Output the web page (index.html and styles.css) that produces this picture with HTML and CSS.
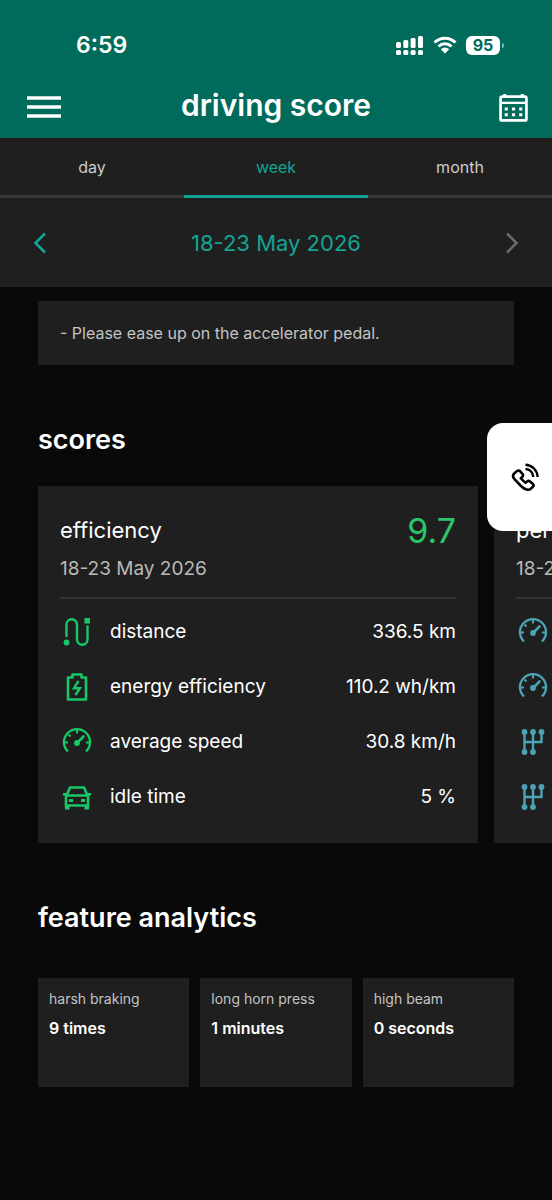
FILE: index.html
```html
<!DOCTYPE html>
<html lang="en">
<head>
<meta charset="utf-8">
<meta name="viewport" content="width=device-width, initial-scale=1">
<title>driving score</title>
<link rel="stylesheet" href="styles.css">
</head>
<body>
<svg class="sprite" aria-hidden="true">
  <symbol id="gauge" viewBox="0 0 30 30">
    <path d="M6 24.500A13 13 0 1 1 24 24.500" fill="none" stroke="currentColor" stroke-width="2.400"/>
    <path d="M15 3v3.500M3 15.500h3M27 15.500h-3M6.500 7.500l2 2" fill="none" stroke="currentColor" stroke-width="2"/>
    <path d="M15 16l6.500-6.500" stroke="currentColor" stroke-width="2.600" stroke-linecap="round"/>
    <circle cx="15" cy="16" r="2.900" fill="currentColor"/>
  </symbol>
  <symbol id="gears" viewBox="0 0 30 30">
    <path d="M6.500 5v20M15 5v20M23.500 5v10h-17" fill="none" stroke="currentColor" stroke-width="2.400"/>
    <g fill="currentColor"><circle cx="6.500" cy="5" r="2.900"/><circle cx="15" cy="5" r="2.900"/><circle cx="23.500" cy="5" r="2.900"/><circle cx="6.500" cy="25" r="2.900"/><circle cx="15" cy="25" r="2.900"/></g>
  </symbol>
</svg>

<header class="top">
  <div class="status">
    <span class="clock">6:59</span>
    <div class="indicators">
      <svg class="signal" viewBox="0 0 28 20" aria-hidden="true">
        <g fill="#fff"><rect x="0" y="7" width="5" height="6" rx="1.500"/><rect x="7.300" y="5" width="5" height="8" rx="1.500"/><rect x="14.600" y="3" width="5" height="10" rx="1.500"/><rect x="22" y="1" width="5" height="12" rx="1.500"/><rect x="0" y="15" width="5" height="5" rx="1.500"/><rect x="7.300" y="15" width="5" height="5" rx="1.500"/><rect x="14.600" y="15" width="5" height="5" rx="1.500"/><rect x="22" y="15" width="5" height="5" rx="1.500"/></g>
      </svg>
      <svg class="wifi" viewBox="0 0 24 18" aria-hidden="true">
        <path d="M1.500 6.500a15 15 0 0 1 21 0M5.500 10.500a9.300 9.300 0 0 1 13 0" fill="none" stroke="#fff" stroke-width="3"/>
        <path d="M12 17.500l-4.200-4.200a6 6 0 0 1 8.400 0z" fill="#fff"/>
      </svg>
      <span class="battery">95</span>
    </div>
  </div>
  <div class="bar">
    <button class="icon-button" aria-label="Menu">
      <svg class="menu" viewBox="0 0 34 22"><path d="M0 2h34M0 11h34M0 20h34" stroke="#fff" stroke-width="3.500"/></svg>
    </button>
    <h1 class="title">driving score</h1>
    <button class="icon-button calendar-button" aria-label="Calendar">
      <svg class="calendar" viewBox="0 0 28 28">
        <rect x="1.500" y="3.500" width="25" height="23" rx="1.500" fill="none" stroke="#fff" stroke-width="2.600"/>
        <path d="M1 9.500h26" stroke="#fff" stroke-width="2.200"/><path d="M5.500 1v3M22.500 1v3" stroke="#fff" stroke-width="3"/>
        <g fill="#fff"><path d="M5.500 14h3v3h-3zM12.500 14h3v3h-3zM19.500 14h3v3h-3zM5.500 19.500h3v3h-3zM12.500 19.500h3v3h-3zM19.500 19.500h3v3h-3z"/></g>
      </svg>
    </button>
  </div>
</header>

<nav class="tabs">
  <button class="tab">day</button>
  <button class="tab tab-active" aria-current="true">week</button>
  <button class="tab">month</button>
</nav>

<div class="period">
  <button class="icon-button" aria-label="Previous week"><svg class="chevron" viewBox="0 0 14 22"><path d="M12 1.500L2.500 11l9.500 9.500" fill="none" stroke="currentColor" stroke-width="2.600"/></svg></button>
  <span class="period-label">18-23 May 2026</span>
  <button class="icon-button next" aria-label="Next week"><svg class="chevron" viewBox="0 0 14 22"><path d="M2 1.500l9.500 9.500L2 20.500" fill="none" stroke="currentColor" stroke-width="2.600"/></svg></button>
</div>

<main class="content">
  <p class="tip">- Please ease up on the accelerator pedal.</p>

  <h2 class="heading">scores</h2>
  <div class="cards">
    <section class="card efficiency">
      <div class="card-head">
        <div class="card-top"><h3 class="card-title">efficiency</h3><span class="score">9.7</span></div>
        <p class="card-date">18-23 May 2026</p>
      </div>
      <ul class="metrics">
        <li class="metric">
          <svg class="metric-icon" viewBox="0 0 30 30" aria-hidden="true"><path d="M4.500 20V7.500a5.250 5.250 0 0 1 10.500 0v15a5.250 5.250 0 0 0 10.500 0V8.500" fill="none" stroke="currentColor" stroke-width="2.400"/><circle cx="4.500" cy="25.500" r="2.900" fill="currentColor"/><path d="M22.500 1h5.500v5.500h-5.500z" fill="currentColor"/></svg>
          <span class="name">distance</span><span class="value">336.5 km</span>
        </li>
        <li class="metric">
          <svg class="metric-icon" viewBox="0 0 30 30" aria-hidden="true"><path d="M10.500 5.500V2.500h9v3h4.500v22H6v-22z" fill="none" stroke="currentColor" stroke-width="2.600" stroke-linejoin="round"/><path d="M16.500 9l-4.500 7.200h6L13.500 23" fill="none" stroke="currentColor" stroke-width="2.400"/></svg>
          <span class="name">energy efficiency</span><span class="value">110.2 wh/km</span>
        </li>
        <li class="metric">
          <svg class="metric-icon" aria-hidden="true"><use href="#gauge"/></svg>
          <span class="name">average speed</span><span class="value">30.8 km/h</span>
        </li>
        <li class="metric">
          <svg class="metric-icon" viewBox="0 0 30 30" aria-hidden="true"><path d="M4.500 13.500L8 5.500h14l3.500 8M1 12.300h4M25 12.300h4M4 13.500h22v10H4z" fill="none" stroke="currentColor" stroke-width="2.600"/><path d="M3 23h4.500v4.500H3zM22.500 23H27v4.500h-4.500zM7 17h4v3H7zM19 17h4v3h-4z" fill="currentColor"/></svg>
          <span class="name">idle time</span><span class="value">5 %</span>
        </li>
      </ul>
    </section>
    <section class="card performance">
      <div class="card-head">
        <div class="card-top"><h3 class="card-title">performance</h3></div>
        <p class="card-date">18-23 May 2026</p>
      </div>
      <ul class="metrics">
        <li class="metric"><svg class="metric-icon" aria-hidden="true"><use href="#gauge"/></svg></li>
        <li class="metric"><svg class="metric-icon" aria-hidden="true"><use href="#gauge"/></svg></li>
        <li class="metric"><svg class="metric-icon" aria-hidden="true"><use href="#gears"/></svg></li>
        <li class="metric"><svg class="metric-icon" aria-hidden="true"><use href="#gears"/></svg></li>
      </ul>
    </section>
  </div>

  <h2 class="heading">feature analytics</h2>
  <div class="tiles">
    <div class="tile"><span class="tile-name">harsh braking</span><strong class="tile-value">9 times</strong></div>
    <div class="tile"><span class="tile-name">long horn press</span><strong class="tile-value">1 minutes</strong></div>
    <div class="tile"><span class="tile-name">high beam</span><strong class="tile-value">0 seconds</strong></div>
  </div>
</main>

<button class="call" aria-label="Call">
  <svg class="call-icon" viewBox="0 0 28 28">
    <path d="M3.200 10.500l2.700-2.400q1.700-1.300 3.300.200l2.400 2.700q1 1.500-.300 2.800l-1.500 1.600 4.700 4.500 1.700-1.500q1.400-1 2.800.100l2.700 2.300q1.600 1.500.200 3l-2.200 2.100q-1.800 1.200-4 .600Q13 26 10 23L3.500 16.200Q.700 13 3.200 10.500z" fill="none" stroke="currentColor" stroke-width="2.600" stroke-linejoin="round"/>
    <path d="M14.500 6c4.500.300 7.500 3.500 7.800 8M14.500 1.800c6.700.300 11.800 5.500 12.200 12.200" fill="none" stroke="currentColor" stroke-width="2.400"/>
  </svg>
</button>
</body>
</html>
```
FILE: styles.css
```css
* { box-sizing: border-box; margin: 0; padding: 0; }
body {
  min-height: 100vh;
  background: #090909;
  color: #fff;
  font-family: Inter, "Liberation Sans", sans-serif;
  overflow-x: hidden;
}
button { border: 0; background: none; color: inherit; font: inherit; cursor: pointer; }
.sprite { display: none; }

.top { background: #006b5b; }
.status {
  display: flex;
  justify-content: space-between;
  align-items: center;
  height: 76px;
  padding: 14px 52px 0 76px;
}
.clock { font-size: 23px; font-weight: 600; }
.indicators { display: flex; align-items: center; gap: 9px; }
.signal { width: 28px; height: 20px; }
.wifi { width: 24px; height: 18px; }
.battery {
  position: relative;
  width: 34px;
  border-radius: 6px;
  background: #fff;
  color: #006b5b;
  font-size: 16px;
  font-weight: 700;
  line-height: 19px;
  text-align: center;
}
.battery::after {
  content: "";
  position: absolute;
  top: 7px;
  right: -4px;
  width: 2px;
  height: 5px;
  border-radius: 0 2px 2px 0;
  background: #7fb5ad;
}
.bar {
  display: grid;
  grid-template-columns: 1fr auto 1fr;
  align-items: center;
  height: 62px;
  padding: 0 24px 0 24px;
}
.icon-button { display: flex; align-items: center; }
.menu { width: 34px; height: 22px; margin-left: 3px; }
.calendar-button { justify-self: end; }
.calendar { width: 29px; height: 29px; }
.title { padding-bottom: 4px; font-size: 30px; font-weight: 600; line-height: 36px; }

.tabs { display: flex; background: #1f1f1f; }
.tab {
  flex: 1;
  height: 60px;
  border-bottom: 3px solid #363636;
  color: #ccc;
  font-size: 16px;
}
.tab-active { border-color: #12a594; color: #12a594; }

.period {
  display: flex;
  justify-content: space-between;
  align-items: center;
  height: 89px;
  padding: 0 33px;
  background: #1f1f1f;
  color: #12a594;
}
.period-label { font-size: 22px; }
.chevron { width: 14px; height: 22px; }
.next { color: #6b6b6b; }

.content { padding: 14px 38px 113px; }
.tip {
  padding: 20px 22px;
  background: #1f1f1f;
  color: #c4c4c4;
  font-size: 16px;
  line-height: 24px;
}
.heading {
  padding: 57px 0 28px;
  font-size: 27px;
  font-weight: 600;
  line-height: 36px;
}

.cards { display: flex; gap: 16px; margin-right: -38px; overflow: hidden; }
.card { flex: none; width: 440px; padding: 22px 22px 19px; background: #1f1f1f; }
.card-head { padding-bottom: 13px; border-bottom: 2px solid #333; }
.card-top { display: flex; justify-content: space-between; align-items: center; height: 44px; }
.card-title { font-size: 22px; font-weight: 400; }
.score { color: #2ac769; font-size: 34px; }
.card-date { padding-top: 2px; color: #bababa; font-size: 19px; line-height: 30px; }
.metrics { padding-top: 5px; list-style: none; }
.metric { display: flex; align-items: center; height: 55px; font-size: 19px; }
.metric-icon { width: 30px; height: 30px; margin-left: 2px; }
.efficiency .metric-icon { color: #18c768; }
.performance .metric-icon { color: #4ba3b3; }
.name { margin-left: 18px; }
.value { margin-left: auto; }

.tiles { display: grid; grid-template-columns: repeat(3, 1fr); gap: 11px; }
.content .heading:last-of-type { padding: 57px 0 42px; }
.tile { min-height: 109px; padding: 10px 11px; background: #1f1f1f; }
.tile-name { display: block; color: #c4c4c4; font-size: 14px; line-height: 22px; }
.tile-value { display: block; margin-top: 6px; font-size: 16px; font-weight: 600; line-height: 24px; }

.call {
  position: fixed;
  top: 423px;
  right: 0;
  width: 65px;
  height: 108px;
  padding-left: 24px;
  border-radius: 16px 0 0 16px;
  background: #fff;
  color: #000;
}
.call-icon { display: block; width: 28px; height: 28px; }
```
